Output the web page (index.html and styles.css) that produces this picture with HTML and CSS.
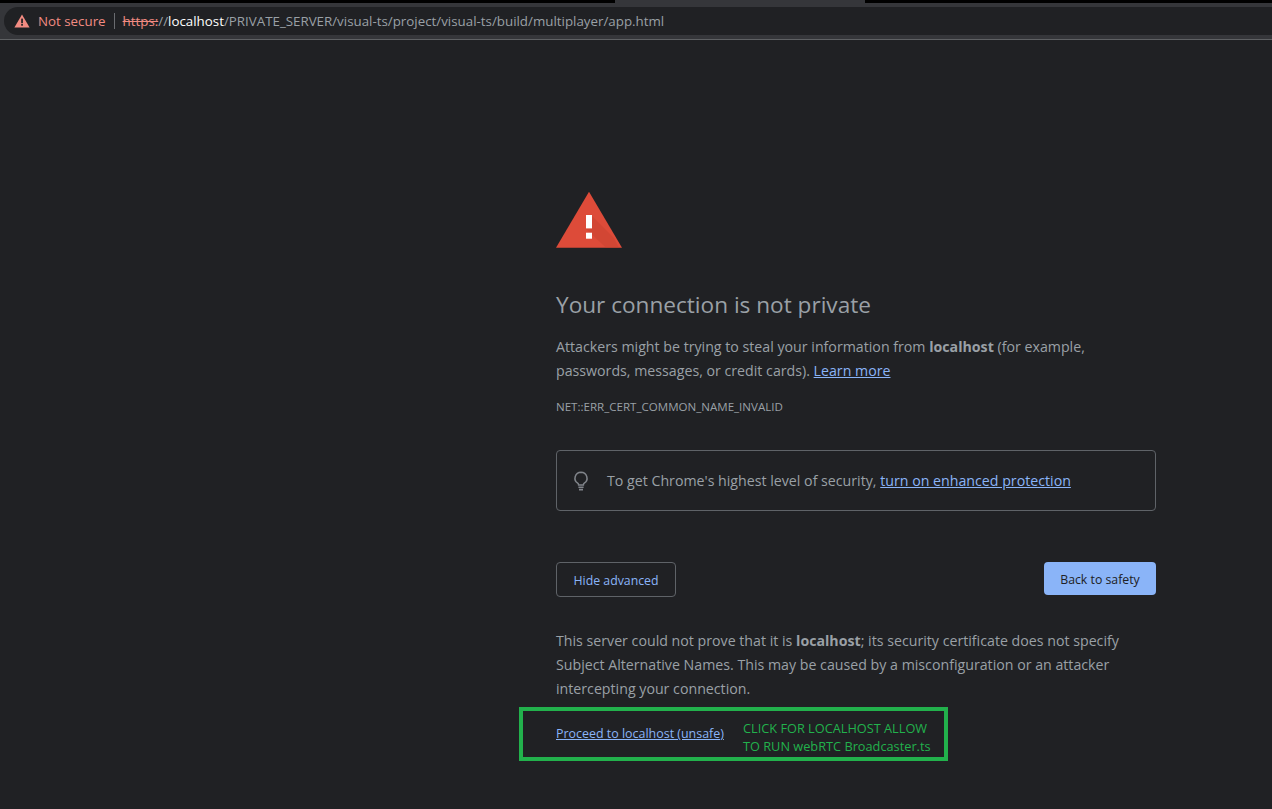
FILE: index.html
```html
<!DOCTYPE html>
<html lang="en">
<head>
<meta charset="utf-8">
<title>Privacy error</title>
<link rel="stylesheet" href="styles.css">
</head>
<body>
<header class="chrome">
  <div class="tabstrip"><div class="tab"></div></div>
  <div class="toolbar">
    <div class="omnibox">
      <svg class="warn-small" viewBox="0 0 16 16" width="16" height="16"><path fill="#f28b82" d="M8 1.5 15.6 14.5H.4Z"/><rect x="7.2" y="5.6" width="1.7" height="4.6" fill="#202124"/><rect x="7.2" y="11" width="1.7" height="1.7" fill="#202124"/></svg>
      <span class="not-secure">Not secure</span>
      <span class="divider"></span>
      <span class="url"><span class="scheme">https:</span><span class="dim">//</span><span class="host">localhost</span><span class="dim">/PRIVATE_SERVER/visual-ts/project/visual-ts/build/multiplayer/app.html</span></span>
    </div>
  </div>
</header>
<main class="page">
  <div class="column">
    <svg class="warn-large" viewBox="0 0 66 57" width="66" height="57">
      <path fill="#dd4b39" d="M33 .7 66 56.7H0Z"/>
      <path fill="#c6402f" opacity=".45" d="M36 25 L58 47 L63 56.7 H50 L30 38Z"/>
      <rect x="30" y="24" width="6" height="13.4" fill="#fff"/>
      <rect x="30" y="41.7" width="6" height="6" fill="#fff"/>
    </svg>
    <h1 class="title">Your connection is not private</h1>
    <p class="body-text first">Attackers might be trying to steal your information from <strong>localhost</strong> (for example, passwords, messages, or credit cards). <a class="link" href="#">Learn more</a></p>
    <p class="code">NET::ERR_CERT_COMMON_NAME_INVALID</p>
    <div class="promo">
      <svg class="bulb" viewBox="0 0 16 20" width="16" height="20"><path fill="none" stroke="#80848a" stroke-width="1.5" d="M8 1.2a6 6 0 0 0-3.3 11c.6.4.9 1 .9 1.7h4.8c0-.7.3-1.3.9-1.7A6 6 0 0 0 8 1.2Z"/><path stroke="#80848a" stroke-width="1.6" d="M5.4 16.2h5.2M6 18.6h4"/></svg>
      <span class="promo-text">To get Chrome's highest level of security, <a class="link" href="#">turn on enhanced protection</a></span>
    </div>
    <div class="actions">
      <button class="btn secondary">Hide advanced</button>
      <button class="btn primary">Back to safety</button>
    </div>
    <p class="body-text details">This server could not prove that it is <strong>localhost</strong>; its security certificate does not specify Subject Alternative Names. This may be caused by a misconfiguration or an attacker intercepting your connection.</p>
    <p class="proceed"><a class="link" href="#">Proceed to localhost (unsafe)</a></p>
  </div>
</main>
<div class="annotation">
  <span class="annotation-text">CLICK FOR LOCALHOST ALLOW<br>TO RUN webRTC Broadcaster.ts</span>
</div>
</body>
</html>
```
FILE: styles.css
```css
* { box-sizing: border-box; }
html, body { margin: 0; height: 100%; }
body {
  background: #202124;
  color: #9aa0a6;
  font-family: "Open Sans", "Noto Sans", sans-serif;
  overflow: hidden;
}
.chrome { height: 40px; background: #35363a; border-bottom: 1px solid #5f6164; }
.tabstrip { height: 3px; background: #000; display: flex; justify-content: flex-start; }
.tab { width: 250px; height: 3px; margin-left: 615px; background: #35363a; }
.toolbar { padding: 4px 0 0 4px; height: 36px; background: #35363a; }
.omnibox {
  height: 28px;
  background: #202124;
  border-radius: 14px 0 0 14px;
  display: flex;
  align-items: center;
  padding-left: 10px;
  font-size: 13.33px;
  white-space: nowrap;
}
.warn-small { flex: none; }
.not-secure { color: #f28b82; margin-left: 8px; }
.divider { width: 1px; height: 16px; background: #6a6c70; margin: 0 8px 0 8px; }
.scheme { color: #f28b82; text-decoration: line-through; }
.dim { color: #9aa0a6; }
.host { color: #fff; }
.page { padding-top: 151px; }
.column { width: 600px; margin-left: 556px; }
.warn-large { display: block; }
.title { margin: 43px 0 0; font-size: 22.6px; font-weight: 400; line-height: 27px; color: #9aa0a6; }
.body-text { margin: 0; font-size: 14.2px; line-height: 24px; color: #9aa0a6; }
.body-text strong { font-weight: 700; }
.first { margin-top: 17px; }
.link { color: #8ab4f8; text-decoration: underline; }
.code { margin: 16px 0 0; font-size: 11.56px; line-height: 16px; color: #9aa0a6; }
.promo {
  margin-top: 35px;
  height: 61px;
  border: 1px solid #5f6368;
  border-radius: 4px;
  display: flex;
  align-items: center;
  padding-left: 16px;
}
.bulb { flex: none; }
.promo-text { margin-left: 18px; font-size: 14.2px; }
.actions { margin-top: 51px; display: flex; justify-content: space-between; align-items: flex-start; }
.btn { font: inherit; font-size: 12.3px; border-radius: 4px; height: 33px; padding: 2px 0 0; }
.secondary { width: 120px; height: 35px; background: transparent; border: 1px solid #5f6368; color: #8ab4f8; }
.primary { width: 112px; background: #8ab4f8; border: 0; color: #202124; }
.details { margin-top: 32px; }
.proceed { margin: 23px 0 0; font-size: 12.45px; line-height: 20px; }
.annotation {
  position: absolute;
  left: 519px;
  top: 707px;
  width: 429px;
  height: 54px;
  border: 4px solid #22b14c;
}
.annotation-text {
  position: absolute;
  left: 220px;
  top: 8px;
  color: #22b14c;
  font-size: 12.75px;
  line-height: 18px;
  white-space: nowrap;
}
```
